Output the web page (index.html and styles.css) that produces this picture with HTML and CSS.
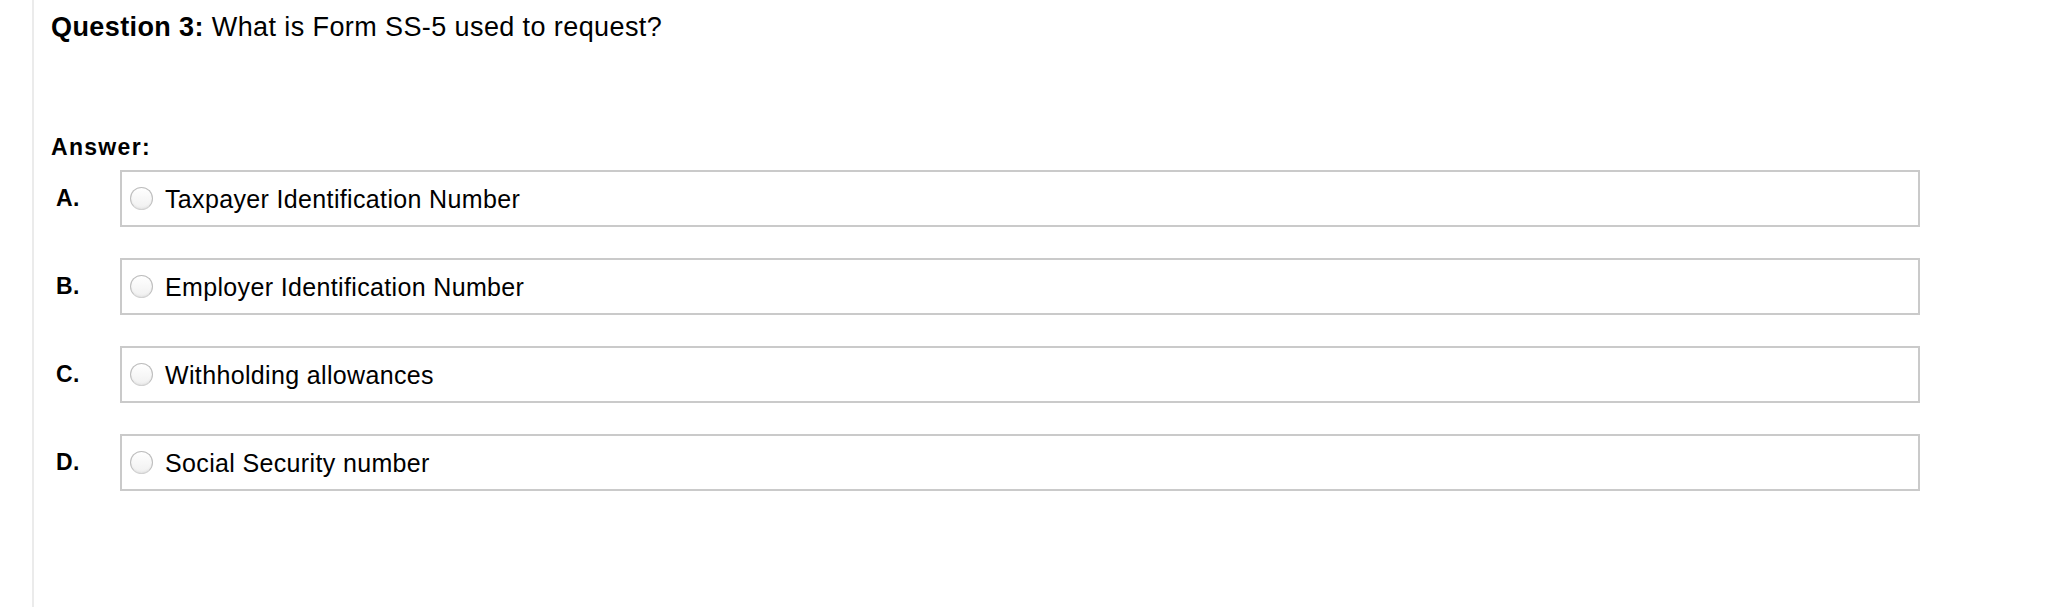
FILE: index.html
```html
<!DOCTYPE html>
<html lang="en">
<head>
    <meta charset="UTF-8">
    <meta name="viewport" content="width=device-width, initial-scale=1.0">
    <title>Question 3</title>
    <link rel="stylesheet" href="styles.css">
</head>
<body>
    <div class="quiz-page">
        <p class="question"><strong>Question 3:</strong> What is Form SS-5 used to request?</p>

        <form id="answerForm">
            <p class="answer-title">Answer:</p>

            <div class="option-row">
                <span class="option-letter">A.</span>
                <label class="option-box" for="optA">
                    <input type="radio" id="optA" name="answer" value="A">
                    <span class="option-text">Taxpayer Identification Number</span>
                </label>
            </div>

            <div class="option-row">
                <span class="option-letter">B.</span>
                <label class="option-box" for="optB">
                    <input type="radio" id="optB" name="answer" value="B">
                    <span class="option-text">Employer Identification Number</span>
                </label>
            </div>

            <div class="option-row">
                <span class="option-letter">C.</span>
                <label class="option-box" for="optC">
                    <input type="radio" id="optC" name="answer" value="C">
                    <span class="option-text">Withholding allowances</span>
                </label>
            </div>

            <div class="option-row">
                <span class="option-letter">D.</span>
                <label class="option-box" for="optD">
                    <input type="radio" id="optD" name="answer" value="D">
                    <span class="option-text">Social Security number</span>
                </label>
            </div>
        </form>
    </div>
</body>
</html>
```

FILE: styles.css
```css
body {
    font-family: "Liberation Sans", Arial, sans-serif;
    color: #000;
    background-color: #fff;
    margin: 0;
}

.quiz-page {
    margin-left: 32px;
    border-left: 2px solid #ebebeb;
    min-height: 100vh;
    padding: 12px 126px 0 17px;
    box-sizing: border-box;
}

.question {
    font-size: 27px;
    line-height: 30px;
    letter-spacing: 0.4px;
    margin: 0;
}

.answer-title {
    font-size: 23px;
    font-weight: bold;
    line-height: 26px;
    letter-spacing: 1.3px;
    margin: 92px 0 10px 0;
}

.option-row {
    display: flex;
    align-items: flex-start;
    padding-left: 5px;
    margin-bottom: 31px;
}

.option-letter {
    width: 64px;
    flex-shrink: 0;
    padding-top: 15px;
    font-size: 23px;
    font-weight: bold;
    line-height: 26px;
    letter-spacing: 0.3px;
}

.option-box {
    flex: 1;
    display: flex;
    align-items: center;
    height: 57px;
    box-sizing: border-box;
    border: 2px solid #cacaca;
    padding-left: 8px;
    cursor: pointer;
}

.option-box input[type="radio"] {
    appearance: none;
    -webkit-appearance: none;
    width: 23px;
    height: 23px;
    margin: 0 12px 0 0;
    border: 1px solid #bdbdbd;
    border-bottom-color: #d2d2d2;
    border-radius: 50%;
    background: linear-gradient(#ffffff, #f0f0f0);
    box-shadow: inset 0 -1px 2px rgba(0, 0, 0, 0.05);
    flex-shrink: 0;
}

.option-box input[type="radio"]:checked {
    background: radial-gradient(circle, #3b8ef3 0 5px, #ffffff 6px);
}

.option-text {
    font-size: 25px;
    line-height: 28px;
    letter-spacing: 0.35px;
}
```
